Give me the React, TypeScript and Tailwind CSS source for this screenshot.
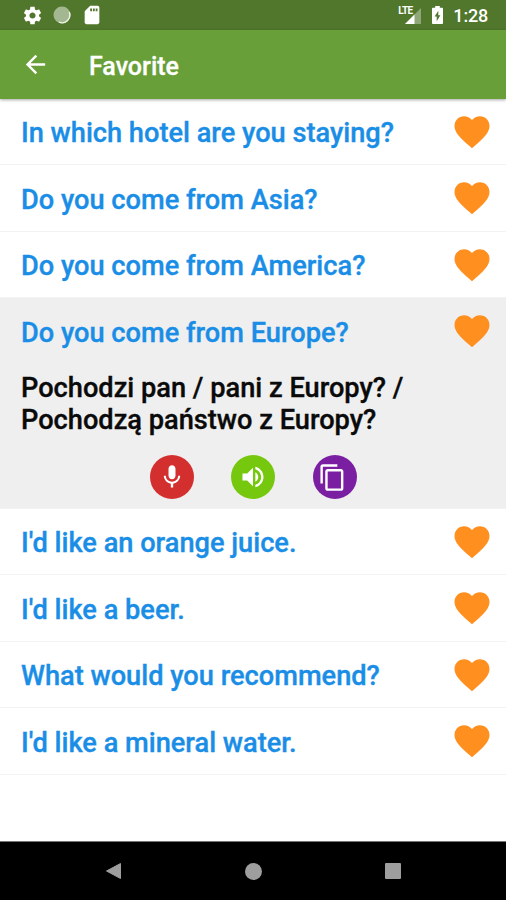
import type { ReactNode } from "react";

const HEART =
  "M12 21.35l-1.45-1.32C5.4 15.36 2 12.28 2 8.5 2 5.42 4.42 3 7.5 3c1.74 0 3.41.81 4.5 2.09C13.09 3.81 14.76 3 16.5 3 19.58 3 22 5.42 22 8.5c0 3.78-3.4 6.86-8.55 11.54L12 21.35z";

function StatusBar() {
  return (
    <div className="flex h-[30px] shrink-0 items-center bg-[#50772c] pl-[22px] pr-[18px] text-white">
      <svg className="size-[21px]" viewBox="0 0 24 24" fill="#fff">
        <path d="M19.43 12.98c.04-.32.07-.64.07-.98s-.03-.66-.07-.98l2.11-1.65c.19-.15.24-.42.12-.64l-2-3.46c-.12-.22-.39-.3-.61-.22l-2.49 1c-.52-.4-1.08-.73-1.69-.98l-.38-2.65C14.46 2.18 14.25 2 14 2h-4c-.25 0-.46.18-.49.42l-.38 2.65c-.61.25-1.17.59-1.69.98l-2.49-1c-.23-.09-.49 0-.61.22l-2 3.46c-.13.22-.07.49.12.64l2.11 1.65c-.04.32-.07.65-.07.98s.03.66.07.98l-2.11 1.65c-.19.15-.24.42-.12.64l2 3.46c.12.22.39.3.61.22l2.49-1c.52.4 1.08.73 1.69.98l.38 2.65c.03.24.24.42.49.42h4c.25 0 .46-.18.49-.42l.38-2.65c.61-.25 1.17-.59 1.69-.98l2.49 1c.23.09.49 0 .61-.22l2-3.46c.12-.22.07-.49-.12-.64l-2.11-1.65zM12 15.5c-1.93 0-3.5-1.57-3.5-3.5s1.57-3.5 3.5-3.5 3.5 1.57 3.5 3.5-1.57 3.5-3.5 3.5z" />
      </svg>
      <svg className="ml-[10px] size-[18px]" viewBox="0 0 18 18">
        <circle cx="9" cy="9" r="8.5" fill="#a3b890" />
        <path d="M16.2 6A7.8 7.8 0 0 1 6 16.2" fill="none" stroke="#eef3ea" strokeWidth="1.4" />
      </svg>
      <svg className="ml-[10px] size-[22px]" viewBox="0 0 24 24" fill="#fff">
        <path d="M18 2h-8L4.02 8 4 20c0 1.1.9 2 2 2h12c1.1 0 2-.9 2-2V4c0-1.1-.9-2-2-2zm-6 6h-2V5h2v3zm3 0h-2V5h2v3zm3 0h-2V5h2v3z" />
      </svg>
      <div className="ml-auto flex items-center">
        <div className="flex">
          <span className="-mr-[7px] mt-[-1px] text-[10px] font-bold leading-[12px] tracking-[-0.7px]">LTE</span>
          <svg className="mt-[2px] h-[16px] w-[16px]" viewBox="0 0 16 16">
            <path d="M16 0v16H0z" fill="#8fa778" />
            <path d="M9.5 6.5V16H0z" fill="#fff" />
          </svg>
        </div>
        <svg className="ml-[11px] h-[18px] w-[11px]" viewBox="0 0 11 18">
          <path d="M3.2 0h4.6v1.8h2.1c.6 0 1.1.5 1.1 1.1v14c0 .6-.5 1.1-1.1 1.1H1.1C.5 18 0 17.5 0 16.9v-14c0-.6.5-1.1 1.1-1.1h2.1z" fill="#fff" />
          <path d="M6.3 4.8 2.6 10.6h2.1v4.6l3.7-6H6.3z" fill="#50772c" />
        </svg>
        <span className="ml-[10px] mt-[2px] text-[18px] font-medium leading-5 tracking-[-0.2px]">1:28</span>
      </div>
    </div>
  );
}

function Row({ text, children }: { text: string; children?: ReactNode }) {
  return (
    <li className={children ? "border-b border-[#f2f2f2] bg-[#efefef]" : "border-b border-[#f2f2f2]"}>
      <div className="flex h-[65.5px] items-center justify-between pl-[21px] pr-[13px]">
        <span className="pt-[5px] text-[27.2px] font-medium text-[#1a8ee6] [-webkit-text-stroke:0.35px_#1a8ee6]">
          {text}
        </span>
        <svg className="mt-[1px] size-[42px]" viewBox="0 0 24 24" fill="#ff9020">
          <path d={HEART} />
        </svg>
      </div>
      {children}
    </li>
  );
}

function ActionButton({ color, children }: { color: string; children: ReactNode }) {
  return (
    <button className={`flex size-[44px] items-center justify-center rounded-full ${color}`}>{children}</button>
  );
}

export default function App() {
  return (
    <div className="flex h-[900px] w-[506px] flex-col overflow-hidden bg-white font-['Roboto',sans-serif]">
      <StatusBar />
      <header className="z-10 flex h-[68.5px] shrink-0 items-center bg-[#689f38] pl-[20.5px] shadow-[0_1px_3px_rgba(0,0,0,0.35)]">
        <svg className="mt-[1px] size-[29px]" viewBox="0 0 24 24" fill="#fff">
          <path d="M20 11H7.83l5.59-5.59L12 4l-8 8 8 8 1.41-1.41L7.83 13H20v-2z" />
        </svg>
        <h1 className="ml-[39.5px] mt-[4.5px] text-[25px] font-medium text-white [-webkit-text-stroke:0.3px_#fff]">
          Favorite
        </h1>
      </header>
      <ul className="flex-1">
        <Row text="In which hotel are you staying?" />
        <Row text="Do you come from Asia?" />
        <Row text="Do you come from America?" />
        <Row text="Do you come from Europe?">
          <p className="pl-[21px] pt-[9.5px] text-[27.2px] font-medium leading-[31.5px] text-[#0a0a0a] [-webkit-text-stroke:0.35px_#0a0a0a]">
            Pochodzi pan / pani z Europy? /
            <br />
            Pochodzą państwo z Europy?
          </p>
          <div className="flex justify-center gap-[37.5px] pb-[8.5px] pt-[19px]">
            <ActionButton color="bg-[#d32f2f]">
              <svg className="size-[28px]" viewBox="0 0 24 24" fill="#fff">
                <path d="M12 14c1.66 0 2.99-1.34 2.99-3L15 5c0-1.66-1.34-3-3-3S9 3.34 9 5v6c0 1.66 1.34 3 3 3zm5.3-3c0 3-2.54 5.1-5.3 5.1S6.7 14 6.7 11H5c0 3.41 2.72 6.23 6 6.72V21h2v-3.28c3.28-.48 6-3.3 6-6.72h-1.7z" />
              </svg>
            </ActionButton>
            <ActionButton color="bg-[#76c80e]">
              <svg className="size-[28px]" viewBox="0 0 24 24" fill="#fff">
                <path d="M3 9v6h4l5 5V4L7 9H3zm13.5 3c0-1.77-1.02-3.29-2.5-4.03v8.05c1.48-.73 2.5-2.25 2.5-4.02zM14 3.23v2.06c2.89.86 5 3.54 5 6.71s-2.11 5.85-5 6.71v2.06c4.01-.91 7-4.49 7-8.77s-2.99-7.86-7-8.77z" />
              </svg>
            </ActionButton>
            <ActionButton color="bg-[#7b1fa2]">
              <svg className="mr-[5px] size-[29px]" viewBox="0 0 24 24" fill="#fff">
                <path d="M16 1H4c-1.1 0-2 .9-2 2v14h2V3h12V1zm3 4H8c-1.1 0-2 .9-2 2v14c0 1.1.9 2 2 2h11c1.1 0 2-.9 2-2V7c0-1.1-.9-2-2-2zm0 16H8V7h11v14z" />
              </svg>
            </ActionButton>
          </div>
        </Row>
        <Row text="I'd like an orange juice." />
        <Row text="I'd like a beer." />
        <Row text="What would you recommend?" />
        <Row text="I'd like a mineral water." />
      </ul>
      <nav className="flex h-[59px] shrink-0 items-center justify-between border-t border-[#777] bg-black pl-[105px] pr-[105px]">
        <svg className="h-[18px] w-[17px]" viewBox="0 0 17 18">
          <path d="M15.5 1.5v15L1.5 9z" fill="#9e9e9e" stroke="#9e9e9e" strokeLinejoin="round" />
        </svg>
        <span className="size-[17px] rounded-full bg-[#9e9e9e]" />
        <span className="size-[16px] rounded-[1px] bg-[#9e9e9e]" />
      </nav>
    </div>
  );
}
